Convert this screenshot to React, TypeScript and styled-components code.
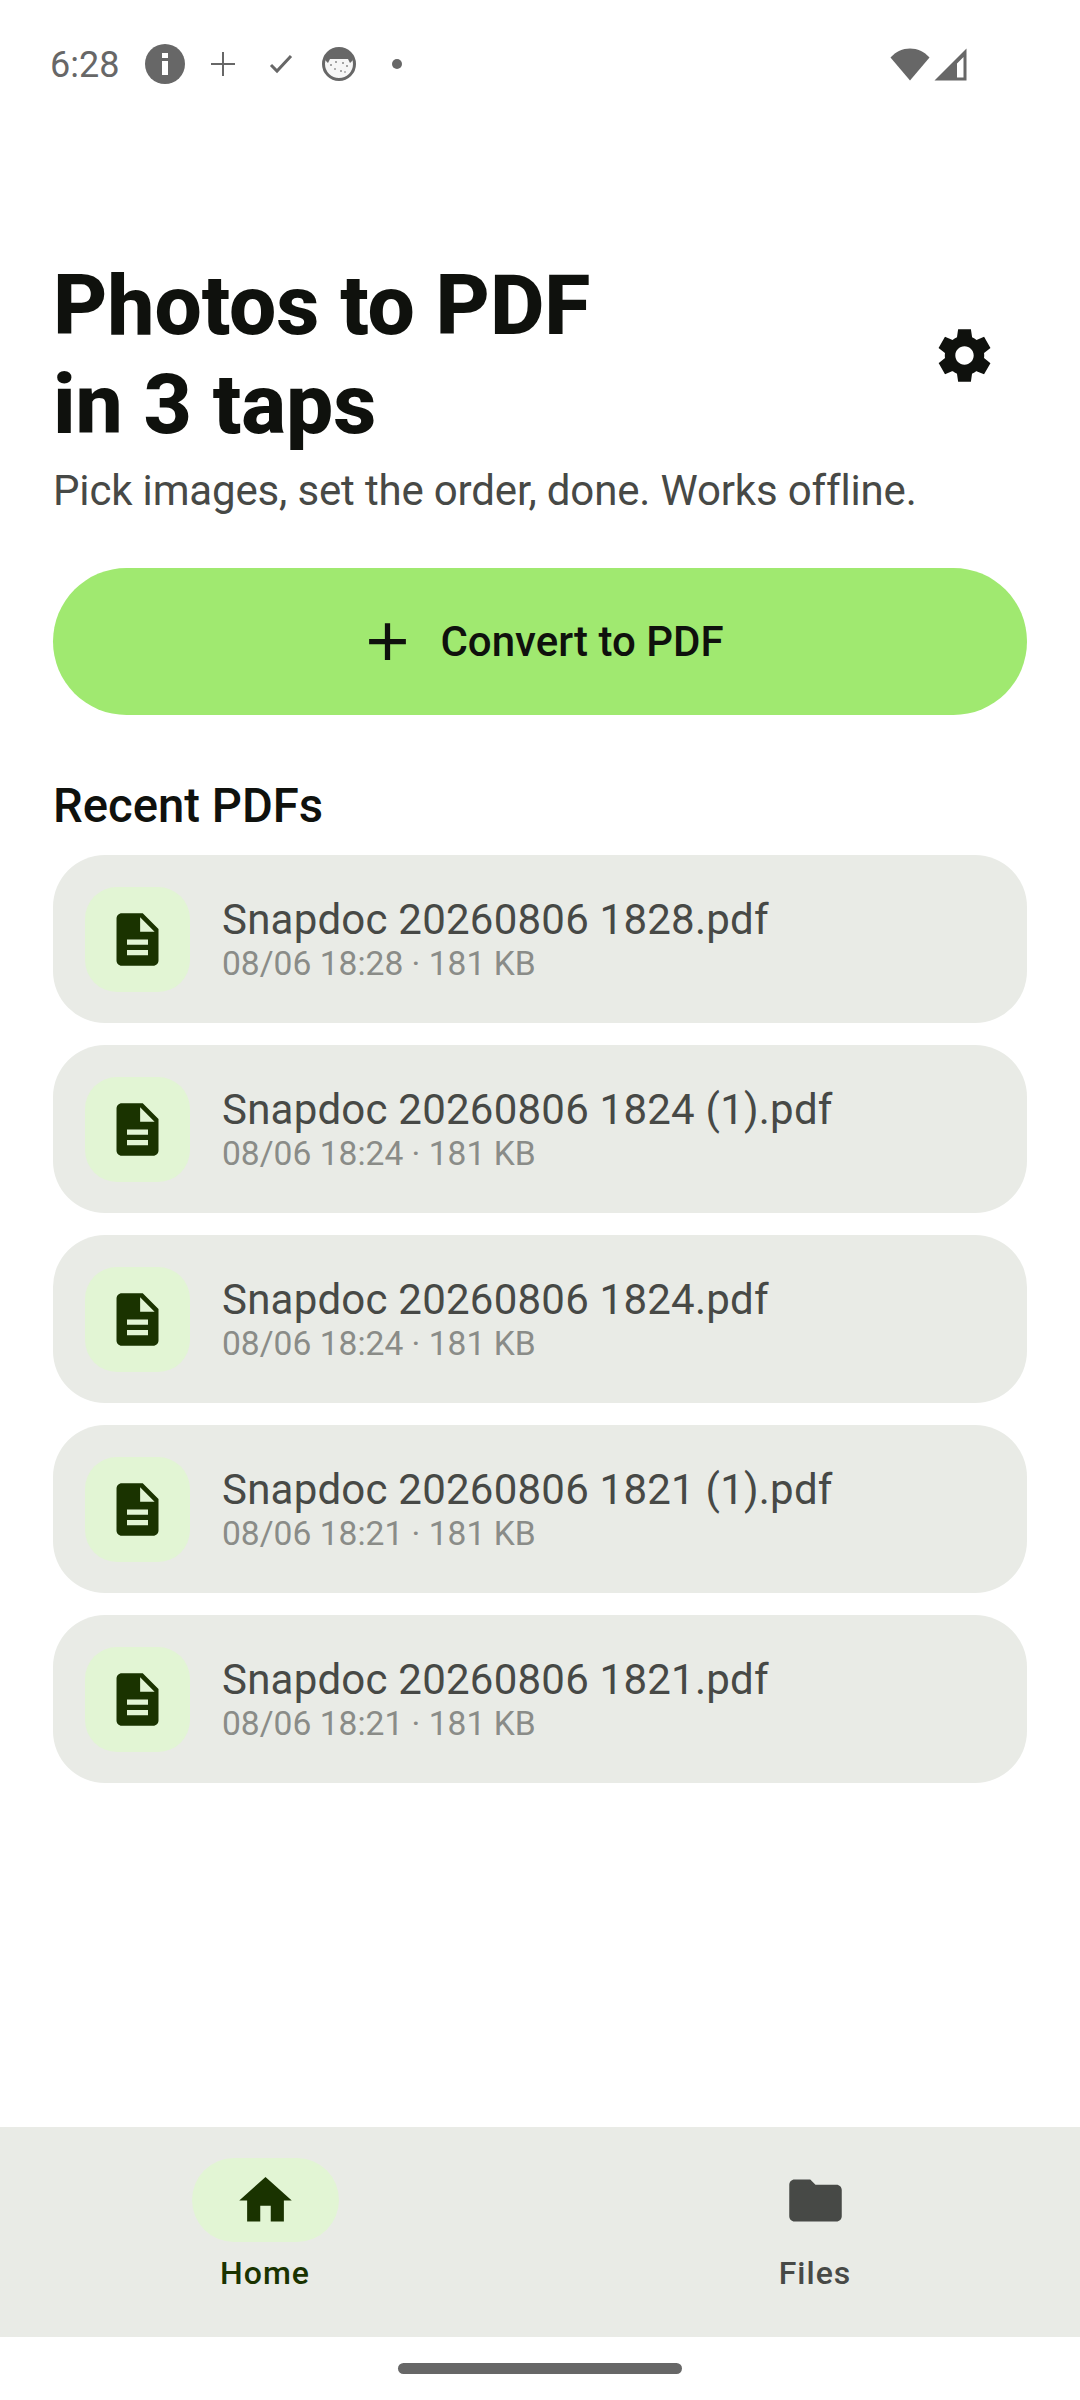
import styled, { createGlobalStyle } from 'styled-components';

const FILES = [
  { name: 'Snapdoc 20260806 1828.pdf', meta: '08/06 18:28 · 181 KB' },
  { name: 'Snapdoc 20260806 1824 (1).pdf', meta: '08/06 18:24 · 181 KB' },
  { name: 'Snapdoc 20260806 1824.pdf', meta: '08/06 18:24 · 181 KB' },
  { name: 'Snapdoc 20260806 1821 (1).pdf', meta: '08/06 18:21 · 181 KB' },
  { name: 'Snapdoc 20260806 1821.pdf', meta: '08/06 18:21 · 181 KB' },
];

const GlobalStyle = createGlobalStyle`
  html, body {
    margin: 0;
    padding: 0;
    background: #fff;
    font-family: Roboto, "Liberation Sans", sans-serif;
  }
`;

const SETTINGS_PATH =
  'M19.44 12.99l-.01.02c.04-.33.08-.67.08-1.01 0-.34-.03-.66-.07-.99l.01.02 2.44-1.92-2.43-4.22-2.87 1.16.01.01c-.52-.4-1.09-.74-1.71-1h.01L14.44 2H9.57l-.44 3.07h.01c-.62.26-1.19.6-1.71 1l.01-.01-2.88-1.17-2.44 4.22 2.44 1.92.01-.02c-.04.33-.07.65-.07.99 0 .34.03.68.08 1.01l-.01-.02-2.1 1.65-.33.26 2.43 4.2 2.88-1.15-.02-.04c.53.41 1.1.75 1.73 1.01h-.03L9.58 22h4.85s.03-.18.06-.42l.38-2.65h-.01c.62-.26 1.2-.6 1.73-1.01l-.02.04 2.88 1.15 2.43-4.2s-.14-.12-.33-.26l-2.11-1.66zM12 15.5c-1.93 0-3.5-1.57-3.5-3.5s1.57-3.5 3.5-3.5 3.5 1.57 3.5 3.5-1.57 3.5-3.5 3.5z';
const DOC_PATH =
  'M14 2H6c-1.1 0-1.99.9-1.99 2L4 20c0 1.1.89 2 1.99 2H18c1.1 0 2-.9 2-2V8l-6-6zm2 16H8v-2h8v2zm0-4H8v-2h8v2zm-3-5V3.5L18.5 9H13z';
const HOME_PATH = 'M10 20v-6h4v6h5v-8h3L12 3 2 12h3v8z';
const FOLDER_PATH =
  'M10 4H4c-1.1 0-1.99.9-1.99 2L2 18c0 1.1.9 2 2 2h16c1.1 0 2-.9 2-2V8c0-1.1-.9-2-2-2h-8l-2-2z';
const PLUS_PATH = 'M19 13h-6v6h-2v-6H5v-2h6V5h2v6h6v2z';

const Icon = ({ d, size, color }: { d: string; size: number; color: string }) => (
  <svg width={size} height={size} viewBox="0 0 24 24" fill={color}>
    <path d={d} />
  </svg>
);

const StatusIcons = () => (
  <S.NotificationIcons>
    <S.NotificationSlot>
      <svg width="42" height="42" viewBox="0 0 42 42">
        <circle cx="21" cy="21" r="20" fill="#676767" />
        <rect x="18" y="10" width="6" height="5" fill="#fff" />
        <rect x="18" y="18" width="6" height="14" fill="#fff" />
      </svg>
    </S.NotificationSlot>
    <S.NotificationSlot>
      <svg width="26" height="26" viewBox="0 0 26 26">
        <path d="M12 1h2v11h11v2H14v11h-2V14H1v-2h11z" fill="#676767" />
      </svg>
    </S.NotificationSlot>
    <S.NotificationSlot>
      <svg width="26" height="22" viewBox="0 0 26 22">
        <path d="M3 12l6 6L23 3" fill="none" stroke="#676767" strokeWidth="3" />
      </svg>
    </S.NotificationSlot>
    <S.NotificationSlot>
      <svg width="34" height="34" viewBox="0 0 34 34">
        <circle cx="17" cy="17" r="15.500" fill="#f6f6f6" stroke="#676767" strokeWidth="3" />
        <path d="M3 13C4 6 10 2 17 2s13 4 14 11l-3 3-2-4H8l-2 4z" fill="#676767" />
        <circle cx="9" cy="18" r="1" fill="#8a8a8a" />
        <circle cx="14" cy="15" r="1" fill="#8a8a8a" />
        <circle cx="21" cy="16" r="1" fill="#8a8a8a" />
        <circle cx="25" cy="19" r="1" fill="#8a8a8a" />
        <circle cx="13" cy="22" r="1" fill="#9a9a9a" />
        <circle cx="19" cy="24" r="1" fill="#8a8a8a" />
        <circle cx="23" cy="25" r="1" fill="#a8a8a8" />
      </svg>
    </S.NotificationSlot>
    <S.NotificationSlot>
      <svg width="12" height="12" viewBox="0 0 12 12">
        <circle cx="6" cy="6" r="5" fill="#676767" />
      </svg>
    </S.NotificationSlot>
  </S.NotificationIcons>
);

const SystemIcons = () => (
  <S.SystemIcons>
    <svg width="40" height="33" viewBox="0 0 40 33">
      <path d="M20 32.500L0.500 9.500C6 3.500 12.500 0.500 20 0.500s14 3 19.500 9z" fill="#676767" />
    </svg>
    <svg width="33" height="33" viewBox="0 0 33 33">
      <path
        fillRule="evenodd"
        d="M32.500 0.500v32H0.500zM29.500 9l-6.500 6.500v14h6.500z"
        fill="#676767"
      />
    </svg>
  </S.SystemIcons>
);

const App = () => {
  return (
    <S.Page>
      <GlobalStyle />
      <S.StatusBar>
        <S.Time>6:28</S.Time>
        <StatusIcons />
        <SystemIcons />
      </S.StatusBar>

      <S.Main>
        <S.Header>
          <S.Title>
            Photos to PDF
            <br />
            in 3 taps
          </S.Title>
          <S.SettingsButton>
            <Icon d={SETTINGS_PATH} size={63} color="#0f110d" />
          </S.SettingsButton>
        </S.Header>
        <S.Subtitle>Pick images, set the order, done. Works offline.</S.Subtitle>

        <S.ConvertButton>
          <Icon d={PLUS_PATH} size={63} color="#0f110d" />
          Convert to PDF
        </S.ConvertButton>

        <S.SectionTitle>Recent PDFs</S.SectionTitle>
        <S.FileList>
          {FILES.map((file) => (
            <S.FileCard key={file.name}>
              <S.FileIconBox>
                <Icon d={DOC_PATH} size={63} color="#1a3300" />
              </S.FileIconBox>
              <S.FileText>
                <S.FileName>{file.name}</S.FileName>
                <S.FileMeta>{file.meta}</S.FileMeta>
              </S.FileText>
            </S.FileCard>
          ))}
        </S.FileList>
      </S.Main>

      <S.BottomNav>
        <S.NavItem>
          <S.NavPill $active>
            <Icon d={HOME_PATH} size={63} color="#1a3300" />
          </S.NavPill>
          <S.NavLabel $active>Home</S.NavLabel>
        </S.NavItem>
        <S.NavItem>
          <S.NavPill>
            <Icon d={FOLDER_PATH} size={63} color="#474946" />
          </S.NavPill>
          <S.NavLabel>Files</S.NavLabel>
        </S.NavItem>
      </S.BottomNav>

      <S.GestureArea>
        <S.GestureHandle />
      </S.GestureArea>
    </S.Page>
  );
};

export default App;

const S = {
  Page: styled.div`
    width: 1080px;
    height: 2400px;
    display: flex;
    flex-direction: column;
    background: #fff;
    overflow: hidden;
  `,
  StatusBar: styled.div`
    height: 128px;
    flex: none;
    display: flex;
    align-items: center;
    padding: 0 113px 0 50px;
    box-sizing: border-box;
  `,
  Time: styled.div`
    width: 86px;
    padding-top: 2px;
    font-size: 36px;
    color: #676767;
  `,
  NotificationIcons: styled.div`
    display: flex;
    align-items: center;
    flex: 1;
  `,
  NotificationSlot: styled.div`
    width: 58px;
    height: 42px;
    display: flex;
    align-items: center;
    justify-content: center;
  `,
  SystemIcons: styled.div`
    display: flex;
    align-items: center;
    gap: 4px;
  `,
  Main: styled.main`
    flex: 1;
    padding: 128px 53px 0;
  `,
  Header: styled.div`
    display: flex;
    align-items: center;
    justify-content: space-between;
  `,
  Title: styled.h1`
    margin: 0;
    font-size: 84px;
    line-height: 99px;
    font-weight: 800;
    letter-spacing: -0.1px;
    color: #0f110d;
  `,
  SettingsButton: styled.div`
    width: 126px;
    height: 126px;
    display: flex;
    align-items: center;
    justify-content: center;
  `,
  Subtitle: styled.p`
    margin: 5px 0 0;
    font-size: 42px;
    line-height: 63px;
    letter-spacing: -0.16px;
    color: #474946;
  `,
  ConvertButton: styled.div`
    margin-top: 46px;
    height: 147px;
    border-radius: 73.5px;
    background: #a0e970;
    display: flex;
    align-items: center;
    justify-content: center;
    gap: 21px;
    font-size: 42px;
    font-weight: 500;
    color: #0f110d;
  `,
  SectionTitle: styled.h2`
    margin: 60px 0 0;
    font-size: 47.25px;
    line-height: 63px;
    font-weight: 500;
    color: #0f110d;
  `,
  FileList: styled.div`
    margin-top: 17px;
    display: flex;
    flex-direction: column;
    gap: 22px;
  `,
  FileCard: styled.div`
    height: 168px;
    box-sizing: border-box;
    padding: 0 32px;
    border-radius: 52px;
    background: #e9ebe6;
    display: flex;
    align-items: center;
    gap: 32px;
  `,
  FileIconBox: styled.div`
    width: 105px;
    height: 105px;
    border-radius: 32px;
    background: #e2f5d4;
    display: flex;
    align-items: center;
    justify-content: center;
  `,
  FileText: styled.div`
    padding-top: 3px;
    display: flex;
    flex-direction: column;
  `,
  FileName: styled.div`
    font-size: 42px;
    line-height: 46px;
    letter-spacing: 0.22px;
    color: #474946;
  `,
  FileMeta: styled.div`
    font-size: 33.6px;
    line-height: 42px;
    color: #8a8c88;
  `,
  BottomNav: styled.nav`
    height: 210px;
    flex: none;
    display: grid;
    grid-template-columns: 530px 530px;
    column-gap: 20px;
    background: #e9ebe6;
  `,
  NavItem: styled.div`
    padding-top: 31px;
    display: flex;
    flex-direction: column;
    align-items: center;
  `,
  NavPill: styled.div<{ $active?: boolean }>`
    width: 147px;
    height: 84px;
    border-radius: 42px;
    background: ${({ $active }) => ($active ? '#e2f5d4' : 'transparent')};
    display: flex;
    align-items: center;
    justify-content: center;
  `,
  NavLabel: styled.div<{ $active?: boolean }>`
    margin-top: 10px;
    font-size: 32px;
    line-height: 42px;
    letter-spacing: 1px;
    font-weight: 500;
    color: ${({ $active }) => ($active ? '#1a3300' : '#474946')};
  `,
  GestureArea: styled.div`
    height: 63px;
    flex: none;
    display: flex;
    justify-content: center;
    padding-top: 26px;
    box-sizing: border-box;
  `,
  GestureHandle: styled.div`
    width: 284px;
    height: 11px;
    border-radius: 6px;
    background: #676767;
  `,
};
